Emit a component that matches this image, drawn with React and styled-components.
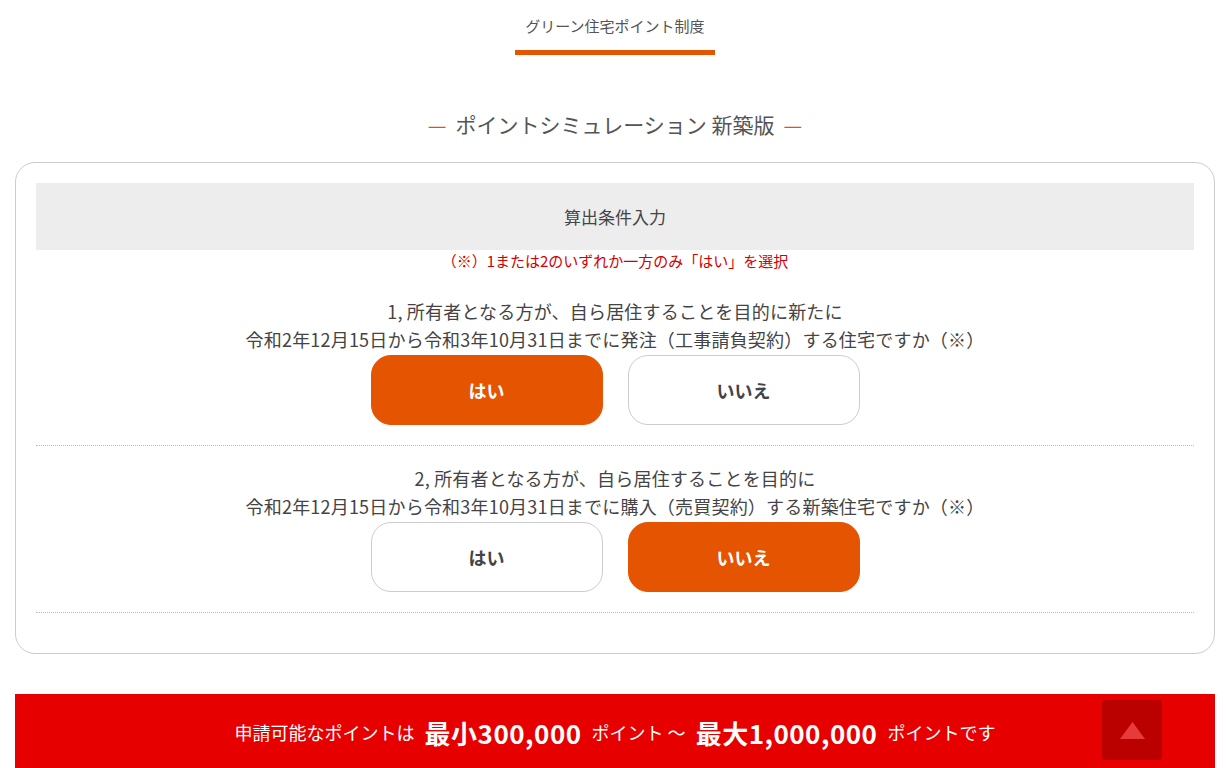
import React from "react";
import styled, { createGlobalStyle } from "styled-components";

const GlobalStyle = createGlobalStyle`
  html, body { margin: 0; padding: 0; background: #fff; }
  body {
    font-family: "Noto Sans CJK JP", "Noto Sans", sans-serif;
    color: #444;
  }
  * { box-sizing: border-box; }
`;

const Page = styled.div`
  width: 1200px;
  margin: 0 16px 0 15px;
`;

const Nav = styled.nav`
  display: flex;
  justify-content: center;
  padding-top: 16px;
`;

const NavTab = styled.div`
  width: 200px;
  display: flex;
  flex-direction: column;
  align-items: center;
  font-size: 15px;
  line-height: 20px;
  color: #555;
  &::after {
    content: "";
    display: block;
    width: 100%;
    height: 5px;
    margin-top: 14px;
    background: #e55400;
  }
`;

const Title = styled.h2`
  margin: 53px 0 22px;
  text-align: center;
  font-size: 21px;
  line-height: 32px;
  font-weight: 400;
  color: #555;
`;

const Dash = styled.span`
  color: #e55400;
  margin: 0 9px;
`;

const Card = styled.section`
  border: 1px solid #ccc;
  border-radius: 20px;
  padding: 20px 20px 40px;
`;

const CardHead = styled.div`
  height: 67px;
  background: #ededed;
  display: flex;
  align-items: center;
  justify-content: center;
  font-size: 17px;
  color: #444;
`;

const Note = styled.p`
  margin: 0 0 7px;
  text-align: center;
  font-size: 15px;
  line-height: 22px;
  color: #d40000;
`;

const Question = styled.div`
  padding: 18px 0 20px;
  border-bottom: 1px dotted #bbb;
`;

const QText = styled.p`
  margin: 0;
  text-align: center;
  font-size: 18px;
  line-height: 28px;
  letter-spacing: 0.2px;
  color: #444;
`;

const Choices = styled.div`
  display: flex;
  justify-content: center;
  gap: 25px;
  margin-top: 2px;
`;

const Choice = styled.button`
  width: 232px;
  height: 70px;
  border-radius: 20px;
  border: 1px solid ${(p) => (p.$active ? "#e55400" : "#ccc")};
  background: ${(p) => (p.$active ? "#e55400" : "#fff")};
  color: ${(p) => (p.$active ? "#fff" : "#444")};
  font-family: inherit;
  font-size: 18px;
  font-weight: 700;
  cursor: pointer;
`;

const ResultBar = styled.div`
  position: relative;
  margin-top: 40px;
  height: 76px;
  background: #e60000;
  color: #fff;
  display: flex;
  align-items: center;
  justify-content: center;
  font-size: 18px;
  white-space: nowrap;
`;

const Big = styled.strong`
  font-size: 26px;
  font-weight: 700;
  letter-spacing: 0.5px;
  margin: 0 10px;
`;

const TopButton = styled.button`
  position: absolute;
  top: 6px;
  right: 53px;
  width: 60px;
  height: 60px;
  border: none;
  border-radius: 3px;
  background: #bb0000;
  display: flex;
  align-items: center;
  justify-content: center;
  padding: 0;
  cursor: pointer;
`;

const questions = [
  {
    lines: [
      "1, 所有者となる方が、自ら居住することを目的に新たに",
      "令和2年12月15日から令和3年10月31日までに発注（工事請負契約）する住宅ですか（※）",
    ],
    answer: "yes",
  },
  {
    lines: [
      "2, 所有者となる方が、自ら居住することを目的に",
      "令和2年12月15日から令和3年10月31日までに購入（売買契約）する新築住宅ですか（※）",
    ],
    answer: "no",
  },
];

export default function App() {
  return (
    <>
      <GlobalStyle />
      <Page>
        <Nav>
          <NavTab>グリーン住宅ポイント制度</NavTab>
        </Nav>
        <Title>
          <Dash>—</Dash>ポイントシミュレーション 新築版<Dash>—</Dash>
        </Title>
        <Card>
          <CardHead>算出条件入力</CardHead>
          <Note>（※）1または2のいずれか一方のみ「はい」を選択</Note>
          {questions.map((q, i) => (
            <Question key={i}>
              {q.lines.map((l) => (
                <QText key={l}>{l}</QText>
              ))}
              <Choices>
                <Choice $active={q.answer === "yes"}>はい</Choice>
                <Choice $active={q.answer === "no"}>いいえ</Choice>
              </Choices>
            </Question>
          ))}
        </Card>
        <ResultBar>
          申請可能なポイントは<Big>最小300,000</Big>ポイント ～<Big>最大1,000,000</Big>ポイントです
          <TopButton aria-label="ページトップへ">
            <svg width="25" height="17" viewBox="0 0 25 17">
              <polygon points="12.5,0 25,17 0,17" fill="#e83a3a" />
            </svg>
          </TopButton>
        </ResultBar>
      </Page>
    </>
  );
}
